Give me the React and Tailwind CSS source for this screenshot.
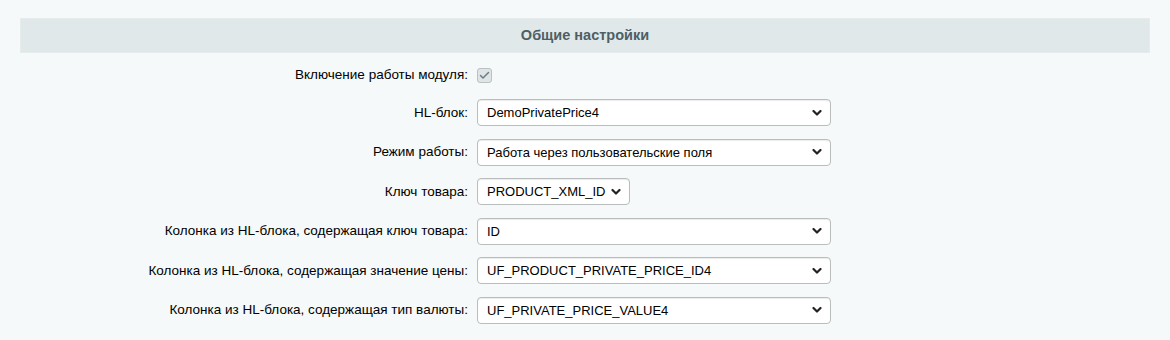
import React from 'react';

const Chevron = () => (
  <svg width="10" height="7" viewBox="0 0 10 7" className="pointer-events-none absolute right-[8px] top-1/2 -translate-y-1/2">
    <polyline points="1.5,1.5 5,5 8.5,1.5" fill="none" stroke="#222" strokeWidth="2.2" strokeLinecap="round" strokeLinejoin="round" />
  </svg>
);

const Select = ({ value, width }) => (
  <div className={`relative h-[27px] ${width} rounded-[4px] border border-[#b9bdbe] bg-white shadow-[inset_0_1px_1px_rgba(0,0,0,0.08)]`}>
    <div className="flex h-full items-center pl-[9px] pr-[24px] text-[13px] text-black whitespace-nowrap overflow-hidden">
      {value}
    </div>
    <Chevron />
  </div>
);

const Row = ({ label, children, h = 'h-[39.5px]' }) => (
  <div className={`flex items-center ${h}`}>
    <div className="w-[40%] pr-[4px] text-right text-[13.5px] text-black">{label}</div>
    <div className="pl-[5px] flex-1">{children}</div>
  </div>
);

const rows = [
  { label: 'HL-блок:', value: 'DemoPrivatePrice4', width: 'w-[354px]' },
  { label: 'Режим работы:', value: 'Работа через пользовательские поля', width: 'w-[354px]' },
  { label: 'Ключ товара:', value: 'PRODUCT_XML_ID', width: 'w-[153px]' },
  { label: 'Колонка из HL-блока, содержащая ключ товара:', value: 'ID', width: 'w-[354px]' },
  { label: 'Колонка из HL-блока, содержащая значение цены:', value: 'UF_PRODUCT_PRIVATE_PRICE_ID4', width: 'w-[354px]' },
  { label: 'Колонка из HL-блока, содержащая тип валюты:', value: 'UF_PRIVATE_PRICE_VALUE4', width: 'w-[354px]' },
];

export default function App() {
  return (
    <div className="min-h-[340px] w-[1170px] bg-[#f5f9f9] pt-[18px]" style={{ fontFamily: '"Liberation Sans", Arial, sans-serif' }}>
      <div className="mx-[20px]">
        <div className="flex h-[35px] items-center justify-center border border-[#e6ecec] bg-[#e0e8ea] text-[14.5px] font-bold text-[#4e5f64]">
          Общие настройки
        </div>
        <div className="pt-[5px]">
          <Row label="Включение работы модуля:" h="h-[35px]">
            <span className="flex h-[15px] w-[15px] items-center justify-center rounded-[3px] border border-[#b9c1c3] bg-[#dfe5e6]">
              <svg width="11" height="9" viewBox="0 0 11 9">
                <polyline points="1.5,4.5 4,7 9.5,1.5" fill="none" stroke="#6e7b80" strokeWidth="1.5" strokeLinecap="round" strokeLinejoin="round" />
              </svg>
            </span>
          </Row>
          {rows.map((r) => (
            <Row key={r.label} label={r.label}>
              <Select value={r.value} width={r.width} />
            </Row>
          ))}
        </div>
      </div>
    </div>
  );
}
